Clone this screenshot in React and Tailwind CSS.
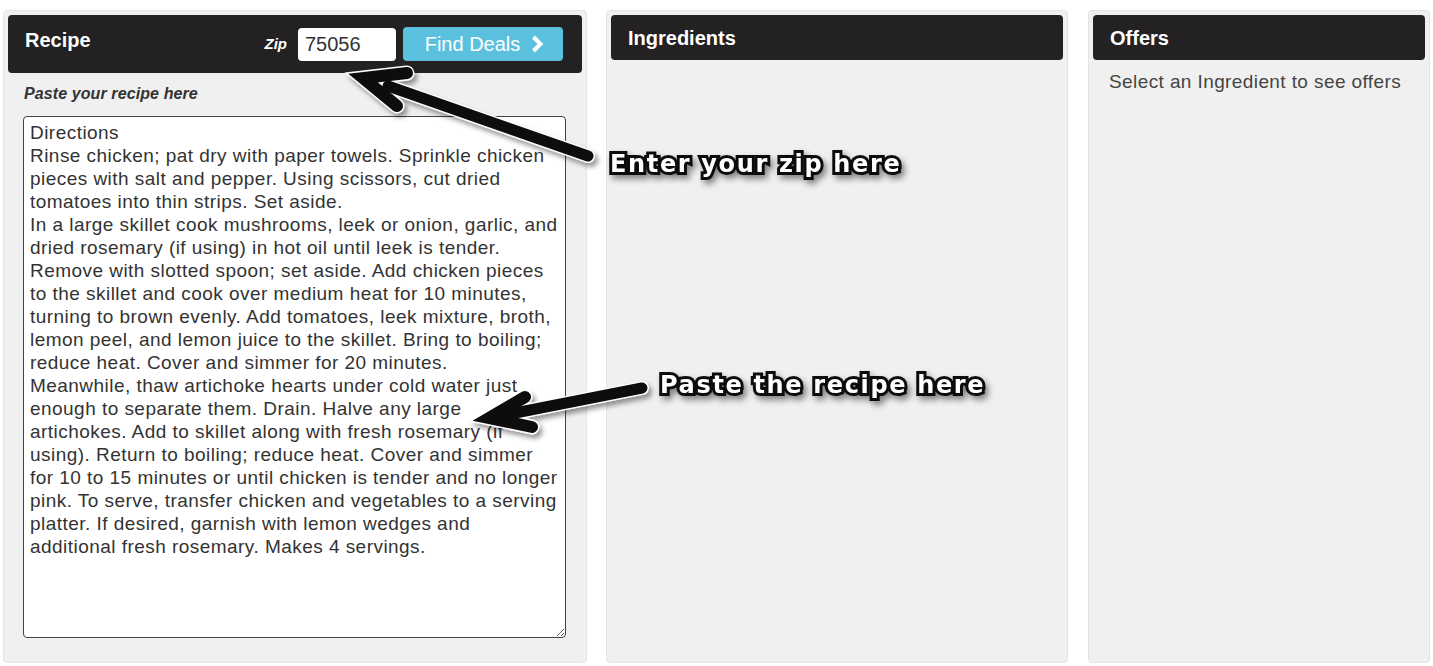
import React from 'react';

// line breaks follow the reference wrapping
const RECIPE = [
  'Directions',
  'Rinse chicken; pat dry with paper towels. Sprinkle chicken',
  'pieces with salt and pepper. Using scissors, cut dried',
  'tomatoes into thin strips. Set aside.',
  'In a large skillet cook mushrooms, leek or onion, garlic, and',
  'dried rosemary (if using) in hot oil until leek is tender.',
  'Remove with slotted spoon; set aside. Add chicken pieces',
  'to the skillet and cook over medium heat for 10 minutes,',
  'turning to brown evenly. Add tomatoes, leek mixture, broth,',
  'lemon peel, and lemon juice to the skillet. Bring to boiling;',
  'reduce heat. Cover and simmer for 20 minutes.',
  'Meanwhile, thaw artichoke hearts under cold water just',
  'enough to separate them. Drain. Halve any large',
  'artichokes. Add to skillet along with fresh rosemary (if',
  'using). Return to boiling; reduce heat. Cover and simmer',
  'for 10 to 15 minutes or until chicken is tender and no longer',
  'pink. To serve, transfer chicken and vegetables to a serving',
  'platter. If desired, garnish with lemon wedges and',
  'additional fresh rosemary. Makes 4 servings.',
].join('\n');

const PanelHeader = ({ title }) => (
  <div className="h-[45px] bg-[#232122] rounded-[4px] flex items-center px-[17px]">
    <h2 className="text-white text-[20px] font-bold">{title}</h2>
  </div>
);

const Callout = ({ className, children }) => (
  <span
    className={`absolute whitespace-nowrap font-['DejaVu_Sans',Verdana,sans-serif] font-bold text-[24px] leading-none tracking-[1.65px] text-white [-webkit-text-stroke:6px_#0c0c0c] [paint-order:stroke_fill] drop-shadow-[3px_4px_3px_rgba(0,0,0,0.45)] ${className}`}
  >
    {children}
  </span>
);

// annotation arrows drawn over the page
const Arrows = () => {
  const shafts = [
    'M588,156 L388,86',
    'M642,388 L505,415',
  ];
  const heads = [
    'M407,73 L363,78 L397,106',
    'M525,397 L489,418 L532,427',
  ];
  return (
    <svg className="absolute inset-0 pointer-events-none" width="1433" height="666">
      <defs>
        <filter id="arrowShadow" x="-20%" y="-20%" width="140%" height="140%">
          <feDropShadow dx="3" dy="4" stdDeviation="2.5" floodColor="#000" floodOpacity="0.4" />
        </filter>
      </defs>
      <g filter="url(#arrowShadow)" fill="none" strokeLinecap="round" strokeLinejoin="miter">
        {shafts.map((d) => (
          <path key={'sw' + d} d={d} stroke="#fff" strokeWidth="14" />
        ))}
        {heads.map((d) => (
          <path key={'hw' + d} d={d} stroke="#fff" strokeWidth="15" />
        ))}
        {shafts.map((d) => (
          <path key={'sb' + d} d={d} stroke="#0e0e0e" strokeWidth="11" />
        ))}
        {heads.map((d) => (
          <path key={'hb' + d} d={d} stroke="#0e0e0e" strokeWidth="12" />
        ))}
      </g>
    </svg>
  );
};

export default function App() {
  return (
    <div className="relative w-[1433px] h-[666px] overflow-hidden bg-white font-['Liberation_Sans',Arial,sans-serif]">
      <div className="flex pt-[10px] pl-[3px]">
        {/* Recipe */}
        <div className="w-[584px] h-[653px] bg-[#f0f0f0] border border-[#e4e4e4] rounded-[4px] p-[4px] flex flex-col">
          <div className="h-[58px] bg-[#232122] rounded-[4px] flex items-center pl-[17px] pr-[19px]">
            <h2 className="text-white text-[20px] font-bold mb-[8px]">Recipe</h2>
            <label className="ml-auto mr-[11px] text-white text-[15px] font-bold italic">Zip</label>
            <input
              type="text"
              defaultValue="75056"
              className="w-[98px] h-[33px] bg-white rounded-[4px] px-[7px] text-[20px] text-[#333] outline-none"
            />
            <button className="ml-[7px] w-[160px] h-[34px] bg-[#5bc0de] rounded-[4px] flex items-center justify-center gap-[11px] text-white text-[20px] pl-[3px]">
              <span>Find Deals</span>
              <svg width="13" height="18" viewBox="0 0 13 18">
                <path d="M2.5,2 L9.5,9 L2.5,16" fill="none" stroke="#fff" strokeWidth="4" />
              </svg>
            </button>
          </div>
          <p className="mt-[11px] ml-[16px] text-[16px] leading-[20px] tracking-[0.1px] font-bold italic text-[#333]">
            Paste your recipe here
          </p>
          <textarea
            defaultValue={RECIPE}
            className="mt-[12px] ml-[15px] w-[543px] h-[522px] bg-white border border-[#444] rounded-[4px] pl-[6px] pr-[2px] pt-[4px] text-[19px] leading-[23px] tracking-[0.46px] text-[#333] outline-none"
          />
        </div>

        {/* Ingredients */}
        <div className="ml-[19px] w-[462px] h-[653px] bg-[#f0f0f0] border border-[#e4e4e4] rounded-[4px] p-[4px]">
          <PanelHeader title="Ingredients" />
        </div>

        {/* Offers */}
        <div className="ml-[20px] w-[342px] h-[653px] bg-[#f0f0f0] border border-[#e4e4e4] rounded-[4px] p-[4px]">
          <PanelHeader title="Offers" />
          <p className="mt-[11px] ml-[16px] text-[19px] leading-[22px] tracking-[0.4px] text-[#444]">
            Select an Ingredient to see offers
          </p>
        </div>
      </div>

      <Arrows />
      <Callout className="left-[610px] top-[152px]">Enter your zip here</Callout>
      <Callout className="left-[660px] top-[373px]">Paste the recipe here</Callout>
    </div>
  );
}
